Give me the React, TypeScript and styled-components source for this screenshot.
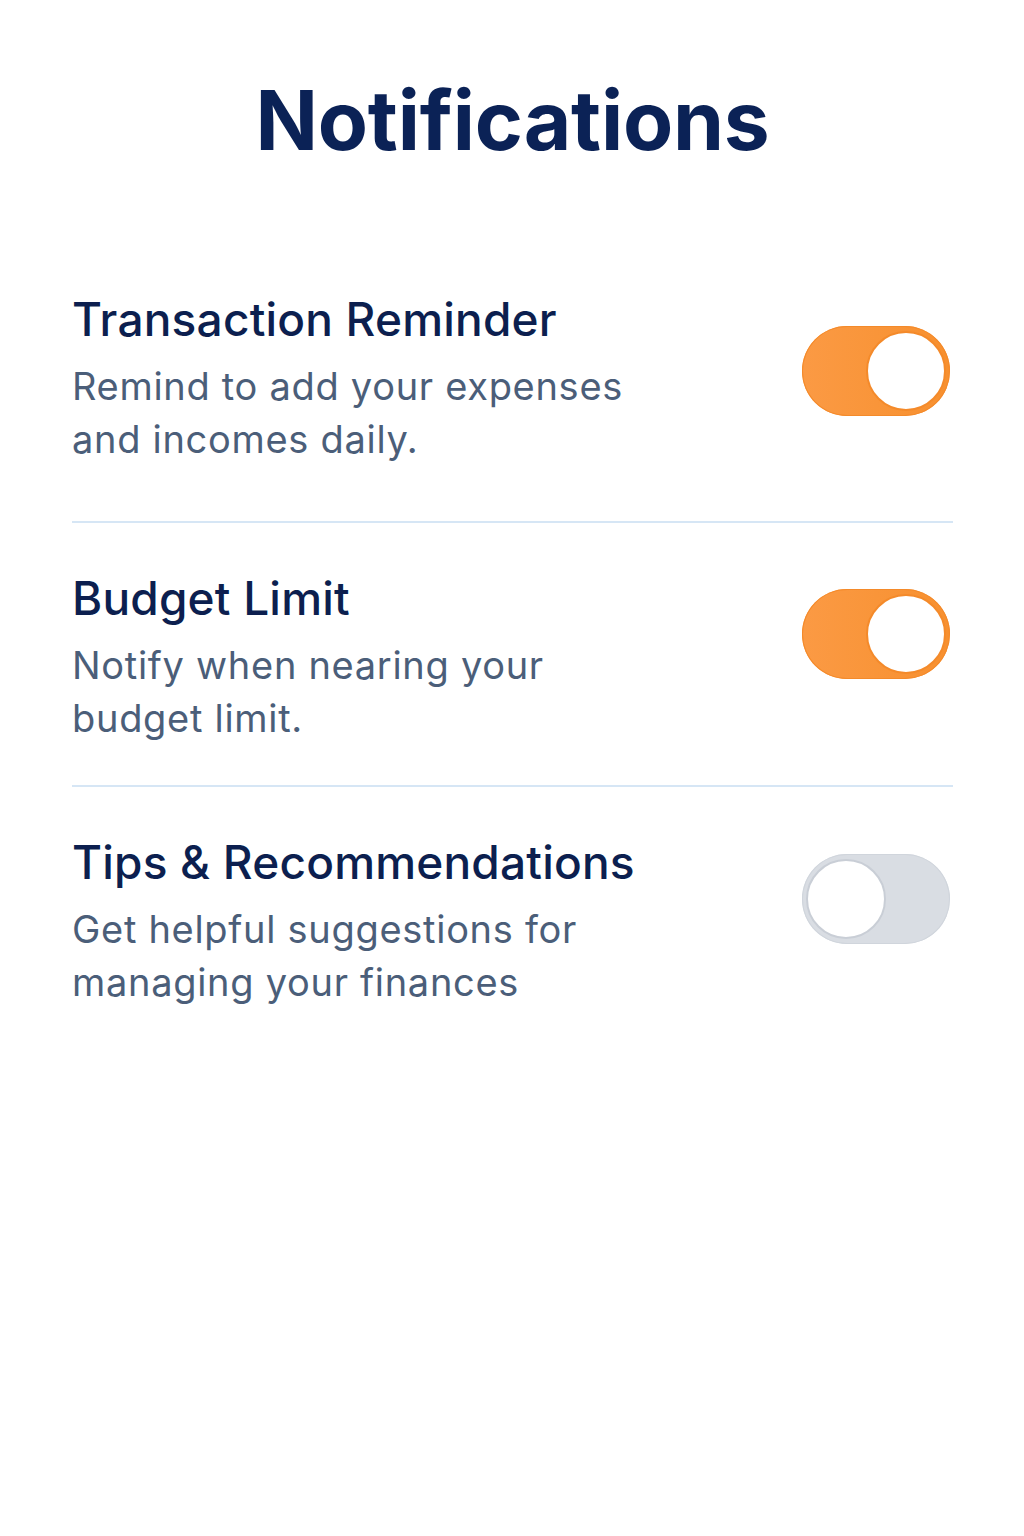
import React from "react";
import styled, { createGlobalStyle } from "styled-components";

const GlobalStyle = createGlobalStyle`
  html, body {
    margin: 0;
    padding: 0;
    background: #ffffff;
  }
  body {
    font-family: Inter, "Noto Sans", "Liberation Sans", sans-serif;
    -webkit-font-smoothing: antialiased;
  }
`;

const Page = styled.div`
  width: 1024px;
  min-height: 1536px;
  box-sizing: border-box;
  padding: 80px 71px 0 72px;
  background: #ffffff;
`;

const Heading = styled.h1`
  margin: 0 0 82px;
  text-align: center;
  font-size: 82px;
  line-height: 1;
  font-weight: 700;
  letter-spacing: -0.2px;
  color: #0b2256;
`;

const List = styled.div`
  display: flex;
  flex-direction: column;
`;

const Row = styled.div<{ $padBottom: number; $last?: boolean }>`
  display: flex;
  align-items: flex-start;
  justify-content: space-between;
  padding: 48px 0 ${(p) => p.$padBottom}px;
  border-bottom: ${(p) => (p.$last ? "none" : "2px solid #d6e6f5")};
`;

const TextBlock = styled.div`
  display: flex;
  flex-direction: column;
  gap: 14px;
`;

const RowTitle = styled.div`
  font-size: 46px;
  line-height: 54px;
  font-weight: 500;
  color: #0c1f4f;
  letter-spacing: 0.2px;
`;

const RowDesc = styled.div`
  font-size: 38px;
  line-height: 53px;
  font-weight: 400;
  color: #4b5e79;
  letter-spacing: 0.7px;
  max-width: 600px;
`;

const Track = styled.div<{ $on: boolean; $offset: number }>`
  flex: none;
  margin-top: ${(p) => p.$offset}px;
  margin-right: 3px;
  width: 148px;
  height: 90px;
  border-radius: 45px;
  box-sizing: border-box;
  display: flex;
  align-items: center;
  justify-content: ${(p) => (p.$on ? "flex-end" : "flex-start")};
  padding: 0 4px;
  background: ${(p) =>
    p.$on
      ? "linear-gradient(90deg, #fb9a44 0%, #f7902f 100%)"
      : "#d9dde3"};
  box-shadow: ${(p) =>
    p.$on ? "inset 0 0 0 1px #f48a2a" : "inset 0 0 0 1px #d0d5dc"};
`;

const Knob = styled.div<{ $on: boolean }>`
  width: 80px;
  height: 80px;
  border-radius: 50%;
  box-sizing: border-box;
  background: #ffffff;
  border: 2px solid ${(p) => (p.$on ? "#f48a2a" : "#c9ced6")};
`;

type Item = {
  title: string;
  desc: string[];
  on: boolean;
  offset: number;
  padBottom: number;
};

const items: Item[] = [
  {
    title: "Transaction Reminder",
    desc: ["Remind to add your expenses", "and incomes daily."],
    on: true,
    offset: 34,
    padBottom: 55,
  },
  {
    title: "Budget Limit",
    desc: ["Notify when nearing your", "budget limit."],
    on: true,
    offset: 18,
    padBottom: 40,
  },
  {
    title: "Tips & Recommendations",
    desc: ["Get helpful suggestions for", "managing your finances"],
    on: false,
    offset: 19,
    padBottom: 38,
  },
];

export default function App() {
  return (
    <>
      <GlobalStyle />
      <Page>
        <Heading>Notifications</Heading>
        <List>
          {items.map((it, i) => (
            <Row key={it.title} $padBottom={it.padBottom} $last={i === items.length - 1}>
              <TextBlock>
                <RowTitle>{it.title}</RowTitle>
                <RowDesc>
                  {it.desc[0]}
                  <br />
                  {it.desc[1]}
                </RowDesc>
              </TextBlock>
              <Track $on={it.on} $offset={it.offset} role="switch" aria-checked={it.on}>
                <Knob $on={it.on} />
              </Track>
            </Row>
          ))}
        </List>
      </Page>
    </>
  );
}
